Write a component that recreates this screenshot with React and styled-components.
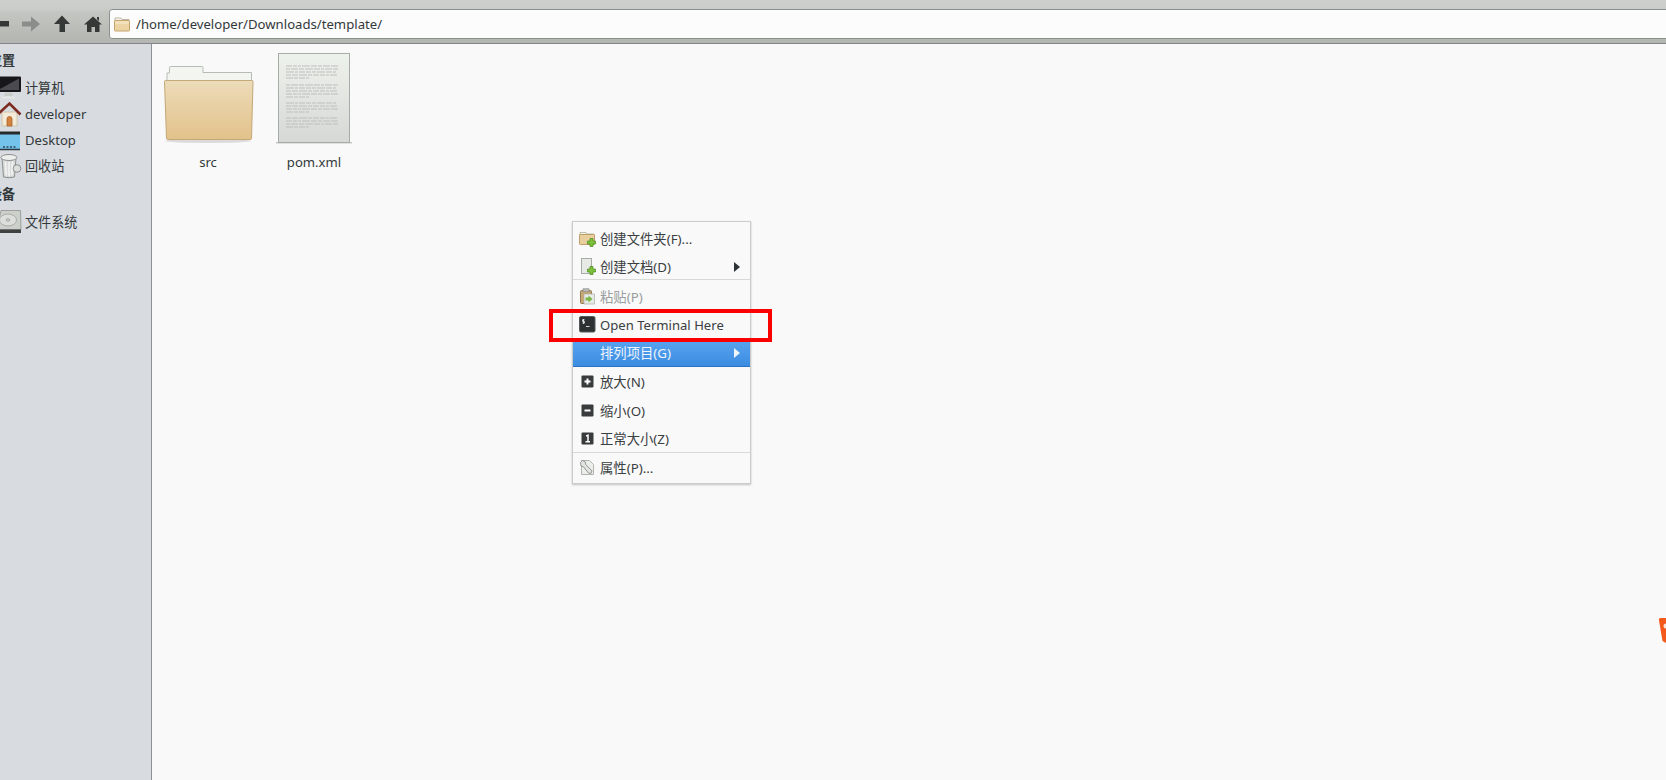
import React from "react";
import styled, { createGlobalStyle } from "styled-components";

const Global = createGlobalStyle`
  html, body { margin: 0; padding: 0; width: 1666px; height: 780px; overflow: hidden; background: #f9f9f9; }
  * { box-sizing: border-box; }
`;
const Win = styled.div`
  position: relative; width: 1666px; height: 780px; overflow: hidden; display: flex; flex-direction: column;
  font-family: "Noto Sans", "Noto Sans CJK SC", sans-serif; font-size: 13.1px; color: #2e3436;
`;
const Toolbar = styled.div`
  height: 44px; flex: none; display: flex; align-items: flex-start; padding-top: 9px;
  background: linear-gradient(#cdd0cc 0, #c9ccc8 9px, #c4c6c2 12px, #b3b5b1 43px);
  border-bottom: 1px solid #82868a;
`;
const NavIcon = styled.svg`
  flex: none; width: ${p => p.$w}px; height: 18px; margin: 6px ${p => p.$mr}px 0 0; display: block;
`;
const PathEntry = styled.div`
  flex: 1; height: 30px; margin-left: 7px; margin-right: -6px; display: flex; align-items: center; gap: 6px; padding-left: 4px;
  background: #fcfcfc; border: 1px solid #8d918d; border-radius: 3px; font-size: 13.15px; color: #33393b;
`;
const Main = styled.div` flex: 1; display: flex; min-height: 0; `;
const Sidebar = styled.nav`
  width: 152px; flex: none; background: #d8dce1; border-right: 1px solid #8b9095; padding-top: 3px; overflow: hidden;
`;
const SectionHead = styled.div`
  height: 26px; line-height: 26px; margin-left: -11px; font-weight: 700; color: #33393b;
  margin-top: ${p => p.$gap || 0}px; margin-bottom: 2px;
`;
const SideRow = styled.div`
  height: 26px; display: flex; align-items: center; margin-left: -4px; gap: 3px; color: #33393b;
`;
const SideLabel = styled.span` position: relative; top: ${p => p.$cjk ? -1 : 0}px; `;
const SideIcon = styled.svg` width: 26px; height: 26px; flex: none; display: block; `;
const Files = styled.section` flex: 1; display: flex; align-items: flex-start; padding: 5px 0 0 3px; background: #f9f9f9; `;
const FileItem = styled.div` width: 106px; display: flex; flex-direction: column; align-items: center; `;
const FileIcon = styled.svg` width: 96px; height: 96px; display: block; `;
const FileName = styled.div` margin-top: 6px; line-height: 22px; color: #33393b; `;
const Menu = styled.div`
  position: absolute; left: 572px; top: 221px; width: 179px; height: 263px; padding: 2px 0 0;
  background: #f9f9f9; border: 1px solid #c9cdc9; box-shadow: 0 1px 2px rgba(0,0,0,.22);
`;
const MenuRow = styled.div`
  position: relative; height: ${p => p.$active ? 27.5 : 28.5}px; display: flex; align-items: center; padding-left: 6px; gap: 4px;
  font-size: ${p => p.$latin ? 13.1 : 13.33}px;
  margin-top: ${p => p.$lower ? 1 : 0}px; margin-bottom: ${p => p.$active ? 1 : 0}px;
  color: ${p => p.$active ? "#eef5fd" : p.$disabled ? "#9a9e9e" : "#3a4042"};
  background: ${p => p.$active ? "linear-gradient(#5aa5f0, #3a8be0)" : "transparent"};
  box-shadow: ${p => p.$active ? "inset 0 -1px 0 #2a74c4" : "none"};
  ${p => p.$sep && `&::before { content: ""; position: absolute; left: 0; right: 0; top: ${p.$lower ? -3 : -1}px; height: 1px; background: #d8dad8; }`}
`;
const MenuIcon = styled.svg` width: 17px; height: 17px; flex: none; display: block; `;
const Caret = styled.span`
  position: absolute; right: 10px; top: 50%; transform: translateY(-50%); width: 0; height: 0;
  border-left: 6px solid ${p => p.$active ? "#eef5fd" : "#2e3436"}; border-top: 5px solid transparent; border-bottom: 5px solid transparent;
`;
const Highlight = styled.div`
  position: absolute; left: 549px; top: 309px; width: 223px; height: 33px; border: 4px solid #fa0000;
`;
const Badge = styled.svg` position: absolute; left: 1658px; top: 617px; width: 8px; height: 28px; display: block; `;

const FolderSmall = ({ size = 16 }) => (
  <svg width={size} height={size} viewBox="0 0 16 16" style={{ flex: "none", display: "block" }}>
    <path d="M1 3.5 L1 2 L7 2 L8 3.5 L15 3.5 L15 6 L1 6Z" fill="#f4f5ef" stroke="#a9a68f" strokeWidth=".8" />
    <rect x=".5" y="4.5" width="15" height="10.5" rx=".8" fill="#ecd3a3" stroke="#c4a56e" />
    <rect x="1.2" y="5.2" width="13.6" height="3" fill="#f3e1bd" />
  </svg>
);
const Plus = () => (
  <g>
    <path d="M11 8.500h3v2.500h2.500v3H14v2.500h-3V14H8.500v-3H11z" fill="#7cc23a" stroke="#4d8a1e" strokeWidth=".7" />
  </g>
);
const Square = ({ children }) => (
  <MenuIcon viewBox="0 0 17 17">
    <rect x="2.5" y="2.5" width="12" height="12" rx="1" fill="#383c3c" />
    {children}
  </MenuIcon>
);
const docParas = [[66, 69, 72, 75, 78], [85, 88, 91, 94, 97], [103, 106, 109, 112], [118, 121, 124, 127]];
const segs = [[6, 4, 3, 8, 6, 4, 7, 7], [4, 7, 5, 8, 6, 3, 7, 5], [8, 3, 6, 5, 4, 8, 6, 3], [5, 6, 8, 4, 6, 5, 3, 7], [7, 4, 6, 3]];

export default function App() {
  return (
    <Win>
      <Global />
      <Toolbar>
        <NavIcon $w={9} $mr={13} viewBox="0 0 9 18"><rect x="-4" y="6" width="13" height="5.5" fill="#343837" /></NavIcon>
        <NavIcon $w={18} $mr={14} viewBox="0 0 18 18"><path d="M0 6.5h9V1.5L18 9l-9 7.5v-5H0z" fill="#8a8d8a" /></NavIcon>
        <NavIcon $w={16} $mr={14} viewBox="0 0 16 18"><path d="M8 0.5L16 9h-5v8H5.5V9H0z" fill="#343837" /></NavIcon>
        <NavIcon $w={18} $mr={0} viewBox="0 0 18 18"><path d="M9 1.5L18 9.5h-2.5V17h-4.5v-5H7.5v5H3V9.5H0L6 4.2z M13 2h2v4l-2-1.8z" fill="#343837" /></NavIcon>
        <PathEntry><FolderSmall />/home/developer/Downloads/template/</PathEntry>
      </Toolbar>
      <Main>
        <Sidebar>
          <SectionHead>位置</SectionHead>
          <SideRow>
            <SideIcon viewBox="0 0 26 26">
              <rect x="0" y="1.500" width="25" height="15.500" rx="1" fill="#17171b" />
              <path d="M2 15L23 3.500V15z" fill="#4a4a50" />
              <path d="M9 17.500h7l1 3.500H8z" fill="#c9cccb" />
              <path d="M6 22.500h13" stroke="#e6e8e6" strokeWidth="1.500" />
            </SideIcon>
            <SideLabel $cjk>计算机</SideLabel>
          </SideRow>
          <SideRow>
            <SideIcon viewBox="0 0 26 26">
              <path d="M6 11h15v14H6z" fill="#f3ead8" stroke="#c9bca0" strokeWidth=".8" />
              <path d="M1.500 13.500L13.500 2.500l11 11" fill="none" stroke="#7d2a20" strokeWidth="2.600" />
              <path d="M11 25v-7a2.500 2.500 0 0 1 5 0v7z" fill="#d3833f" stroke="#a55a24" strokeWidth=".7" />
            </SideIcon>
            <SideLabel>developer</SideLabel>
          </SideRow>
          <SideRow>
            <SideIcon viewBox="0 0 26 26">
              <rect x="0" y="5" width="24" height="17.500" fill="#74c3ea" />
              <rect x="0" y="4.500" width="24" height="3" fill="#262a2c" />
              <path d="M0 22.500h24" stroke="#2d3a42" strokeWidth="1.500" />
              <path d="M7 20h14" stroke="#2d4a5c" strokeWidth="1.600" strokeDasharray="2 1.500" />
            </SideIcon>
            <SideLabel>Desktop</SideLabel>
          </SideRow>
          <SideRow>
            <SideIcon viewBox="0 0 26 26">
              <path d="M6 5l1.500 19q5.500 1.500 11 0L20 5z" fill="#d7dad8" stroke="#8c908e" />
              <ellipse cx="13" cy="4.500" rx="8" ry="3" fill="#eef0ee" stroke="#8c908e" />
              <path d="M9.500 8.500l.8 14M13 9v14M16.500 8.500l-.8 14" stroke="#f2f3f2" strokeWidth="1.600" />
              <circle cx="21" cy="15.500" r="3.800" fill="#dcdfdd" stroke="#8c908e" />
            </SideIcon>
            <SideLabel $cjk>回收站</SideLabel>
          </SideRow>
          <SectionHead $gap={2}>设备</SectionHead>
          <SideRow>
            <SideIcon viewBox="0 0 26 26">
              <path d="M5 1.500h19.500L25 20.500H1z" fill="#ccd0cb" stroke="#8f938f" strokeWidth=".8" />
              <ellipse cx="12" cy="11" rx="8.500" ry="6" fill="#dcdfdb" stroke="#a8aba7" />
              <ellipse cx="12" cy="11" rx="2" ry="1.400" fill="#c2c5c1" stroke="#9a9d99" strokeWidth=".6" />
              <rect x="0" y="20.500" width="25" height="3.500" fill="#3d4140" />
            </SideIcon>
            <SideLabel $cjk>文件系统</SideLabel>
          </SideRow>
        </Sidebar>
        <Files>
          <FileItem>
            <FileIcon viewBox="0 0 96 96">
              <defs>
                <linearGradient id="fld" x1="0" y1="0" x2="0" y2="1">
                  <stop offset="0" stopColor="#ecdcba" />
                  <stop offset=".35" stopColor="#e9d2a8" />
                  <stop offset="1" stopColor="#e2c28b" />
                </linearGradient>
              </defs>
              <path d="M9.500 24V18.500q0-1 1-1H42q1 0 1 1V23.500H91.500V34H7V24z" fill="#f3f6f0" stroke="#b5bbb5" />
              <ellipse cx="48" cy="92" rx="43" ry="2" fill="#000" opacity=".12" />
              <path d="M5.500 31.500H92q1 0 1 1L91.500 89.500q0 1-1.500 1H8q-1.500 0-1.500-1L4.500 32.500q0-1 1-1z" fill="url(#fld)" stroke="#c3a878" />
            </FileIcon>
            <FileName>src</FileName>
          </FileItem>
          <FileItem>
            <FileIcon viewBox="0 0 96 96">
              <defs>
                <linearGradient id="doc" x1="0" y1="0" x2="0" y2="1">
                  <stop offset="0" stopColor="#eef2ec" />
                  <stop offset="1" stopColor="#d6d8d5" />
                </linearGradient>
              </defs>
              <rect x="10" y="93" width="76" height="1.500" fill="#000" opacity=".2" />
              <rect x="12.500" y="4.500" width="71" height="89" fill="url(#doc)" stroke="#a8aca8" />
              {docParas.flatMap((ys, pi) => ys.map((y, li) => {
                let x = 20;
                const row = li === ys.length - 1 ? segs[4] : segs[(li + pi) % 4];
                return row.map((w, i) => {
                  const el = <rect key={`${pi}-${li}-${i}`} x={x} y={y - 49.500} width={w} height="1" fill="#bcbfbc" />;
                  x += w + 1;
                  return el;
                });
              }))}
            </FileIcon>
            <FileName>pom.xml</FileName>
          </FileItem>
        </Files>
      </Main>
      <Menu>
        <MenuRow>
          <MenuIcon viewBox="0 0 17 17">
            <path d="M1 4V2.500h6L8 4h7v3H1z" fill="#f4f5ef" stroke="#a9a68f" strokeWidth=".7" />
            <rect x=".5" y="4.500" width="15" height="10" rx=".8" fill="#e9cf9e" stroke="#bd9e66" />
            <Plus />
          </MenuIcon>
          创建文件夹(F)...
        </MenuRow>
        <MenuRow>
          <MenuIcon viewBox="0 0 17 17">
            <rect x="2.500" y=".5" width="10" height="15" fill="#e6e9e4" stroke="#a8aca8" />
            <Plus />
          </MenuIcon>
          创建文档(D)
          <Caret />
        </MenuRow>
        <MenuRow $sep $lower $disabled>
          <MenuIcon viewBox="0 0 17 17">
            <rect x="1.500" y="2.500" width="11" height="13" rx="1" fill="#c9a873" stroke="#8d7a58" />
            <rect x="4" y=".8" width="6" height="3" fill="#b8bbb8" stroke="#7f8380" strokeWidth=".6" />
            <rect x="5" y="6" width="10.500" height="10" fill="#e9ebe7" stroke="#a8aca8" strokeWidth=".7" />
            <path d="M6.500 9.500h3V7.500l4 3.500-4 3.500v-2h-3z" fill="#7ab648" />
          </MenuIcon>
          粘贴(P)
        </MenuRow>
        <MenuRow $latin>
          <MenuIcon viewBox="0 0 17 17">
            <rect x=".5" y=".5" width="15.500" height="15.500" rx="1.500" fill="#2d3131" stroke="#555a5a" />
            <path d="M5.500 3.700H3.600v1.700h1.800v1.700H3.500M4.500 3v4.800M7 10.500h3.500" stroke="#e9ecec" strokeWidth=".9" fill="none" />
          </MenuIcon>
          Open Terminal Here
        </MenuRow>
        <MenuRow $active>
          <MenuIcon viewBox="0 0 17 17" />
          排列项目(G)
          <Caret $active />
        </MenuRow>
        <MenuRow>
          <Square><path d="M8.500 5.500v6M5.500 8.500h6" stroke="#fff" strokeWidth="2" /></Square>
          放大(N)
        </MenuRow>
        <MenuRow>
          <Square><path d="M5.500 8.500h6" stroke="#fff" strokeWidth="2" /></Square>
          缩小(O)
        </MenuRow>
        <MenuRow>
          <Square><path d="M7 6.200l2-1v6.500M6.500 11.800h4.500" stroke="#fff" strokeWidth="1.500" fill="none" /></Square>
          正常大小(Z)
        </MenuRow>
        <MenuRow $sep>
          <MenuIcon viewBox="0 0 17 17">
            <path d="M2.500 1.500h8l4 4v10h-12z" fill="#eceeea" stroke="#b1b4b0" />
            <path d="M1.500 3.500l2-2 2.500 1 .8 3L13 12l-1 2.500L9.500 14 4.500 7.800l-2.500-.8z" fill="#e2e4e0" stroke="#7f837f" strokeWidth=".8" />
          </MenuIcon>
          属性(P)...
        </MenuRow>
      </Menu>
      <Highlight />
      <Badge viewBox="0 0 8 28">
        <path d="M8 1H2.500Q.5 1 1 3.500L4.500 24l3.500 2z" fill="#f4591c" />
        <circle cx="8" cy="9" r="2.500" fill="#fde3d4" />
      </Badge>
    </Win>
  );
}
